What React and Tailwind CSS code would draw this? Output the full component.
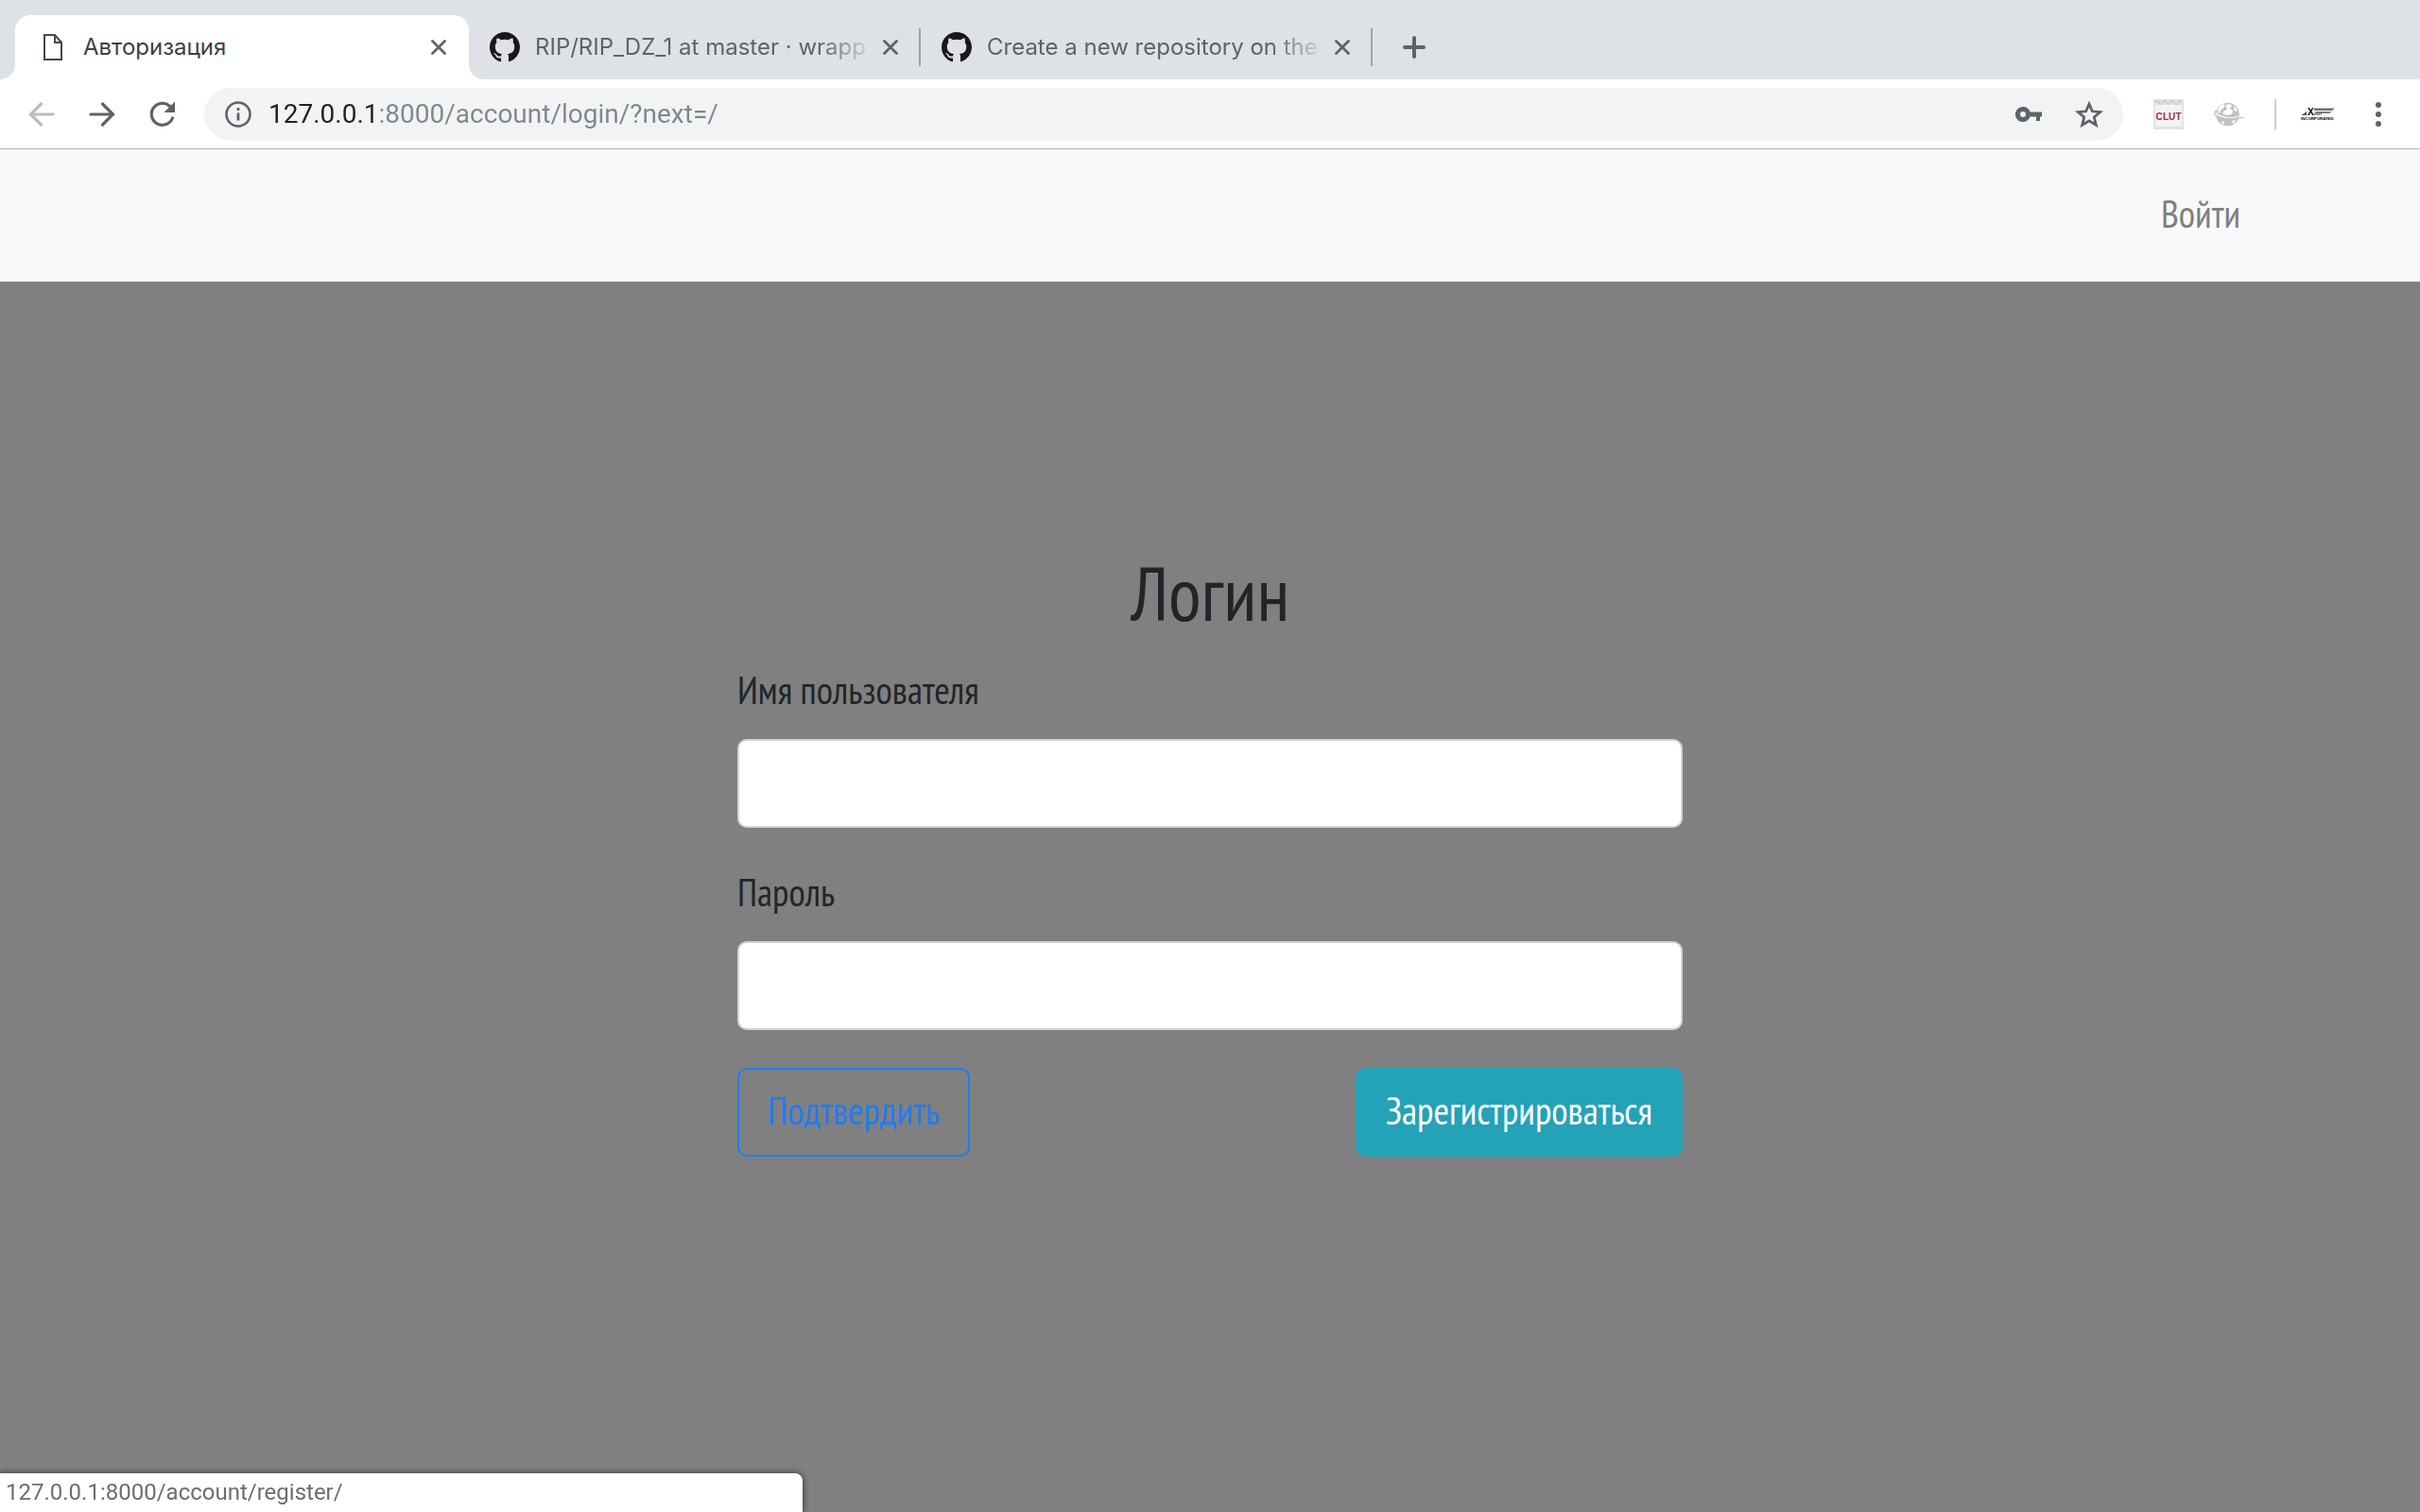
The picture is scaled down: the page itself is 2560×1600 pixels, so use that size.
import React from "react";

function DocIcon() {
  return (
    <svg viewBox="0 0 20 28" className="h-7 w-5 shrink-0" fill="none" stroke="#46484b" strokeWidth="2" aria-hidden="true">
      <path d="M1 1h11l7 8v18H1z" />
      <path d="M12 1v8h7" />
    </svg>
  );
}

function GithubIcon() {
  return (
    <svg viewBox="0 0 16 16" className="size-8 shrink-0" fill="#191717" aria-hidden="true">
      <path d="M8 0C3.58 0 0 3.58 0 8c0 3.54 2.29 6.53 5.47 7.59.4.07.55-.17.55-.38 0-.19-.01-.82-.01-1.49-2.01.37-2.53-.49-2.69-.94-.09-.23-.48-.94-.82-1.13-.28-.15-.68-.52-.01-.53.63-.01 1.08.58 1.23.82.72 1.21 1.87.87 2.33.66.07-.52.28-.87.51-1.07-1.78-.2-3.64-.89-3.64-3.95 0-.87.31-1.59.82-2.15-.08-.2-.36-1.02.08-2.12 0 0 .67-.21 2.2.82.64-.18 1.32-.27 2-.27s1.36.09 2 .27c1.53-1.04 2.2-.82 2.2-.82.44 1.1.16 1.92.08 2.12.51.56.82 1.27.82 2.15 0 3.07-1.87 3.75-3.65 3.95.29.25.54.73.54 1.48 0 1.07-.01 1.93-.01 2.2 0 .21.15.46.55.38A8.01 8.01 0 0 0 16 8c0-4.42-3.58-8-8-8z" />
    </svg>
  );
}

function CloseButton() {
  return (
    <button type="button" aria-label="Закрыть вкладку" className="flex size-4 shrink-0 items-center justify-center">
      <svg viewBox="0 0 16 16" className="size-4" stroke="#5f6368" strokeWidth="2.8" strokeLinecap="round">
        <path d="M1.5 1.5l13 13M14.5 1.5l-13 13" />
      </svg>
    </button>
  );
}

function ActiveTab() {
  return (
    <div className="relative flex h-[68px] w-[480px] items-center rounded-t-2xl bg-white pr-6 pl-[30px]">
      <svg viewBox="0 0 16 16" className="absolute bottom-0 -left-4 size-4" fill="#fff" aria-hidden="true">
        <path d="M16 0v16H0A16 16 0 0 0 16 0z" />
      </svg>
      <svg viewBox="0 0 16 16" className="absolute -right-4 bottom-0 size-4" fill="#fff" aria-hidden="true">
        <path d="M0 0v16h16A16 16 0 0 1 0 0z" />
      </svg>
      <DocIcon />
      <span className="ml-[22px] flex-1 text-[#3c4043]">Авторизация</span>
      <CloseButton />
    </div>
  );
}

function Tab({ title }) {
  return (
    <div className="flex h-[68px] w-[476px] items-center px-[22px]">
      <GithubIcon />
      <span className="ml-4 flex-1 whitespace-nowrap text-[#5f6368] [mask-image:linear-gradient(to_right,#000_300px,transparent_360px)]">
        {title}
      </span>
      <CloseButton />
    </div>
  );
}

function TabDivider() {
  return <div className="h-10 w-[2px] bg-[#9fa1a5]" />;
}

function TabStrip() {
  return (
    <div className="flex items-center bg-[#dee1e6] px-4 pt-4 font-[Inter,sans-serif] text-2xl">
      <ActiveTab />
      <Tab title="RIP/RIP_DZ_1 at master · wrapp" />
      <TabDivider />
      <Tab title="Create a new repository on the" />
      <TabDivider />
      <button type="button" aria-label="Новая вкладка" className="ml-8">
        <svg viewBox="0 0 24 24" className="size-6" stroke="#5f6368" strokeWidth="4" strokeLinecap="round">
          <path d="M12 2v20M2 12h20" />
        </svg>
      </button>
    </div>
  );
}

function Toolbar() {
  return (
    <div className="flex h-[74px] items-center border-b border-[#b4b6b8] bg-white pr-8 pl-7">
      <button type="button" aria-label="Назад" disabled>
        <svg viewBox="0 0 32 32" className="size-8" fill="none" stroke="#b9bbbd" strokeWidth="3.2" strokeLinecap="round">
          <path d="M28 16H5M15.500 5L4.500 16l11 11" />
        </svg>
      </button>
      <button type="button" aria-label="Вперёд" className="ml-8">
        <svg viewBox="0 0 32 32" className="size-8" fill="none" stroke="#5f6368" strokeWidth="3.2" strokeLinecap="round">
          <path d="M4 16h23M16.500 5l11 11-11 11" />
        </svg>
      </button>
      <button type="button" aria-label="Обновить" className="ml-8">
        <svg viewBox="0 0 32 32" className="size-8" fill="none" stroke="#5f6368" strokeWidth="3.2">
          <path d="M26.500 20A11.500 11.500 0 1 1 24 7.700" strokeLinecap="round" />
          <path d="M29 2.500V14H17.500z" fill="#5f6368" stroke="none" />
        </svg>
      </button>
      <div className="ml-7 flex h-14 flex-1 items-center rounded-full bg-[#f1f3f4] pr-5 pl-[22px]">
        <svg viewBox="0 0 28 28" className="size-7 shrink-0" fill="none" stroke="#5f6368" aria-hidden="true">
          <circle cx="14" cy="14" r="12.500" strokeWidth="2.600" />
          <path d="M14 12.500v8M14 7v3" strokeWidth="2.800" />
        </svg>
        <input
          type="text"
          aria-label="Адресная строка"
          defaultValue="127.0.0.1:8000/account/login/?next=/"
          className="mx-[18px] min-w-0 flex-1 bg-[linear-gradient(to_right,#202124_115px,#80868b_115px)] bg-clip-text font-[Roboto,sans-serif] text-[28px] text-transparent outline-none"
        />
        <button type="button" aria-label="Пароли">
          <svg viewBox="0 0 28 16" className="h-4 w-7" fill="#5f6368" fillRule="evenodd">
            <path d="M8 0a8 8 0 1 0 7.500 10.500H22V15h4v-4.500h2v-5H15.500A8 8 0 0 0 8 0zm0 5a3 3 0 1 1 0 6 3 3 0 0 1 0-6z" />
          </svg>
        </button>
        <button type="button" aria-label="Добавить в закладки" className="ml-[34px]">
          <svg viewBox="0 0 32 32" className="size-8" fill="none" stroke="#5f6368" strokeWidth="2.800">
            <path d="M16 5l3.300 7.800 8.400.7-6.400 5.500 2 8.300L16 22.900l-7.300 4.400 2-8.300-6.400-5.500 8.400-.7z" />
          </svg>
        </button>
      </div>
      <button type="button" aria-label="CLUT" className="ml-8">
        <svg viewBox="0 0 32 32" className="size-8">
          <rect width="32" height="32" fill="#e4e3e3" />
          <rect x="2" y="6" width="28" height="23" rx="2" fill="#f4f3f3" />
          <path d="M2 3.500q2-4 4 0t4 0 4 0 4 0 4 0 4 0 4 0" fill="none" stroke="#c9c9c9" strokeWidth="1.500" />
          <g fill="#a3323a" fontFamily="Liberation Sans, sans-serif" fontWeight="bold" fontSize="10" textAnchor="middle">
            <text x="6" y="22">C</text>
            <text x="13" y="22">L</text>
            <text x="19.500" y="22">U</text>
            <text x="26.500" y="22">T</text>
          </g>
        </svg>
      </button>
      <button type="button" aria-label="Глобус" className="ml-8">
        <svg viewBox="0 0 32 28" className="h-7 w-8" fill="#c0c0c0">
          <circle cx="14.500" cy="14" r="12.300" />
          <path d="M4.500 9q1-4 5-6l2 1-1 3-3 2-1 3-2 1zM12 4l5-1 2 2-2 3 3 2-1 4-6 1-4-2 2-3 3-1zM21 5q3 2 4 5l-2 1-2-2zM19 21l4-1q-1 3-3 4zM9 21l2 1v3q-2-1-3-3z" fill="#fff" />
          <path d="M2 13.500q11 6 20 4t9 0" fill="none" stroke="#fff" strokeWidth="1.500" />
          <path d="M2.500 10q-4 4 0 5.500 11 4.500 19 3t10-1" fill="none" stroke="#c0c0c0" strokeWidth="1.300" />
        </svg>
      </button>
      <div className="ml-8 h-8 w-[2px] bg-[#cdcfd1]" />
      <button type="button" aria-label="Профиль" className="ml-6">
        <svg viewBox="0 0 40 16" className="h-4 w-10">
          <path d="M16 1.500h21.500l-2 2.500H16z" fill="#6e736e" />
          <path d="M17 5h17.500l-2 2H17z" fill="#7d827d" />
          <path d="M2.500 9l5.500-4v4z" fill="#555" />
          <text x="9" y="9" fill="#000" fontFamily="Liberation Sans, sans-serif" fontWeight="bold" fontSize="10">X</text>
          <text x="15.500" y="9" fill="#333" fontFamily="Liberation Sans, sans-serif" fontWeight="bold" fontSize="4">enel</text>
          <text x="2" y="13.500" fill="#000" fontFamily="Liberation Sans, sans-serif" fontWeight="bold" fontSize="4.300">INCORPORATED</text>
        </svg>
      </button>
      <button type="button" aria-label="Меню" className="ml-8">
        <svg viewBox="0 0 24 32" className="h-8 w-6" fill="#5f6368">
          <circle cx="12" cy="6" r="3" />
          <circle cx="12" cy="16" r="3" />
          <circle cx="12" cy="26" r="3" />
        </svg>
      </button>
    </div>
  );
}

function Field({ id, label, type }) {
  return (
    <div className="mb-10">
      <label htmlFor={id} className="mb-6 block">{label}</label>
      <input
        id={id}
        type={type}
        className="block h-[94px] w-full rounded-[10px] border-2 border-[#ced4da] bg-white px-8 outline-none"
      />
    </div>
  );
}

export default function App() {
  return (
    <div className="flex min-h-screen flex-col bg-[#808080]">
      <header>
        <TabStrip />
        <Toolbar />
      </header>
      <nav className="flex h-[140px] items-center justify-end bg-[#f8f9fa] pr-[190px] pb-1 font-['PT_Sans_Narrow',sans-serif] text-[40px]">
        <a href="#login" className="text-[#7f7f7f]">Войти</a>
      </nav>
      <main className="mx-auto w-full max-w-[1000px] flex-1 pt-[282px] font-['PT_Sans_Narrow',sans-serif] text-[40px] leading-[56px] text-[#212529]">
        <h1 className="mb-[26px] text-center text-[80px] leading-[96px]">Логин</h1>
        <form>
          <Field id="username" label="Имя пользователя" type="text" />
          <Field id="password" label="Пароль" type="password" />
          <div className="flex items-center justify-between">
            <button type="button" className="h-[94px] rounded-[10px] border-2 border-[#1f7cf5] px-[30px] pb-1 text-[#1f7cf5]">
              Подтвердить
            </button>
            <a href="#register" className="flex h-[94px] items-center rounded-[10px] bg-[#23a2b8] px-8 pb-1 text-white">
              Зарегистрироваться
            </a>
          </div>
        </form>
      </main>
      <div className="fixed bottom-0 left-0 h-[41px] w-[849px] rounded-tr-lg bg-white pl-[6px] font-[Roboto,sans-serif] text-2xl leading-[41px] text-[#6b6e72] shadow-[0_0_6px_1px_rgba(0,0,0,0.5)]">
        127.0.0.1:8000/account/register/
      </div>
    </div>
  );
}
